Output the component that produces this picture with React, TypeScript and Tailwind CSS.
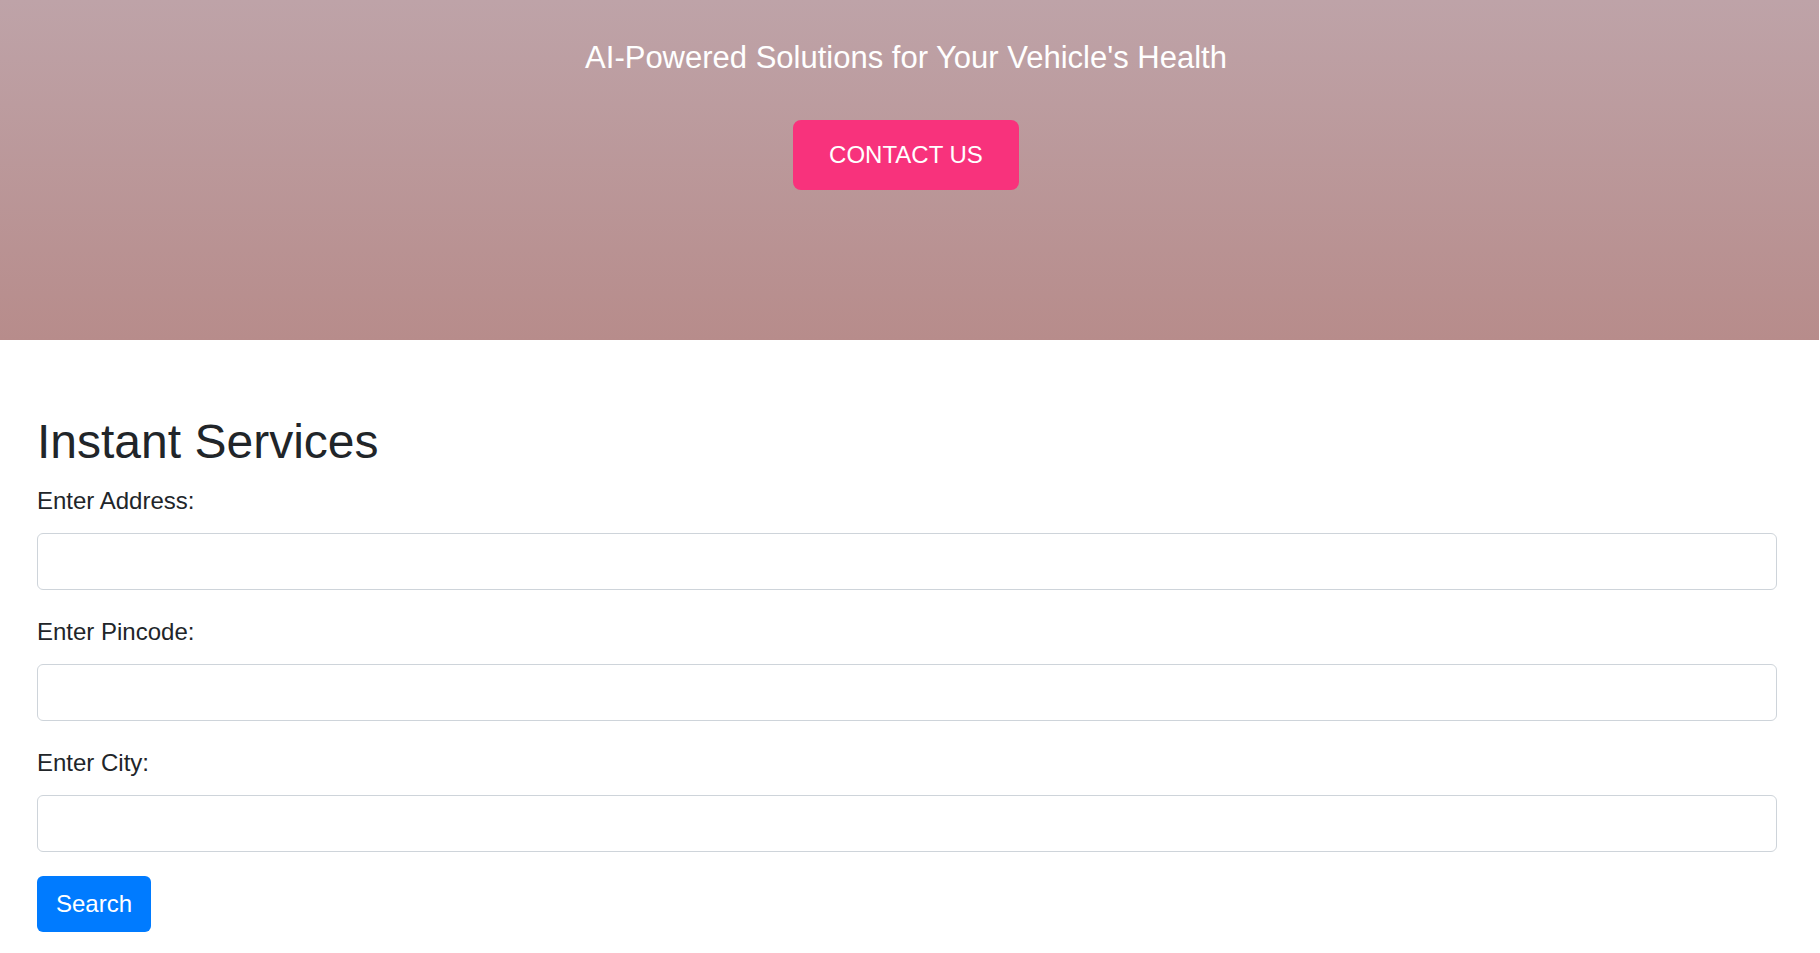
import React from "react";

const fields = [
  { id: "address", label: "Enter Address:" },
  { id: "pincode", label: "Enter Pincode:" },
  { id: "city", label: "Enter City:" },
];

export default function App() {
  return (
    <div className="min-h-[953px] bg-white text-[#212529] font-['Liberation_Sans',Arial,sans-serif]">
      <section className="h-[340px] w-[1819px] bg-gradient-to-b from-[#bea3a8] to-[#b78c8b] flex flex-col items-center pt-[35px] pr-[7px]">
        <p className="text-[31px] leading-[45px] text-white">AI-Powered Solutions for Your Vehicle's Health</p>
        <button className="mt-[40px] rounded-[8px] bg-[#f8327c] px-[36px] py-[17px] text-[24px] leading-[36px] text-white">
          CONTACT US
        </button>
      </section>

      <section className="pl-[37px] pr-[43px] pt-[73px]">
        <h2 className="text-[48px] leading-[57.6px] mb-[12px]">Instant Services</h2>
        <form onSubmit={(e) => e.preventDefault()}>
          {fields.map((f) => (
            <div key={f.id} className="mb-[24px]">
              <label htmlFor={f.id} className="block text-[24px] leading-[36px] mb-[14px]">
                {f.label}
              </label>
              <input
                id={f.id}
                type="text"
                className="block w-full h-[57px] rounded-[6px] border border-[#ced4da] bg-white px-[18px] text-[24px] outline-none"
              />
            </div>
          ))}
          <button type="submit" className="h-[56px] w-[114px] rounded-[6px] bg-[#007bff] text-[24px] leading-[36px] text-white">
            Search
          </button>
        </form>
      </section>
    </div>
  );
}
